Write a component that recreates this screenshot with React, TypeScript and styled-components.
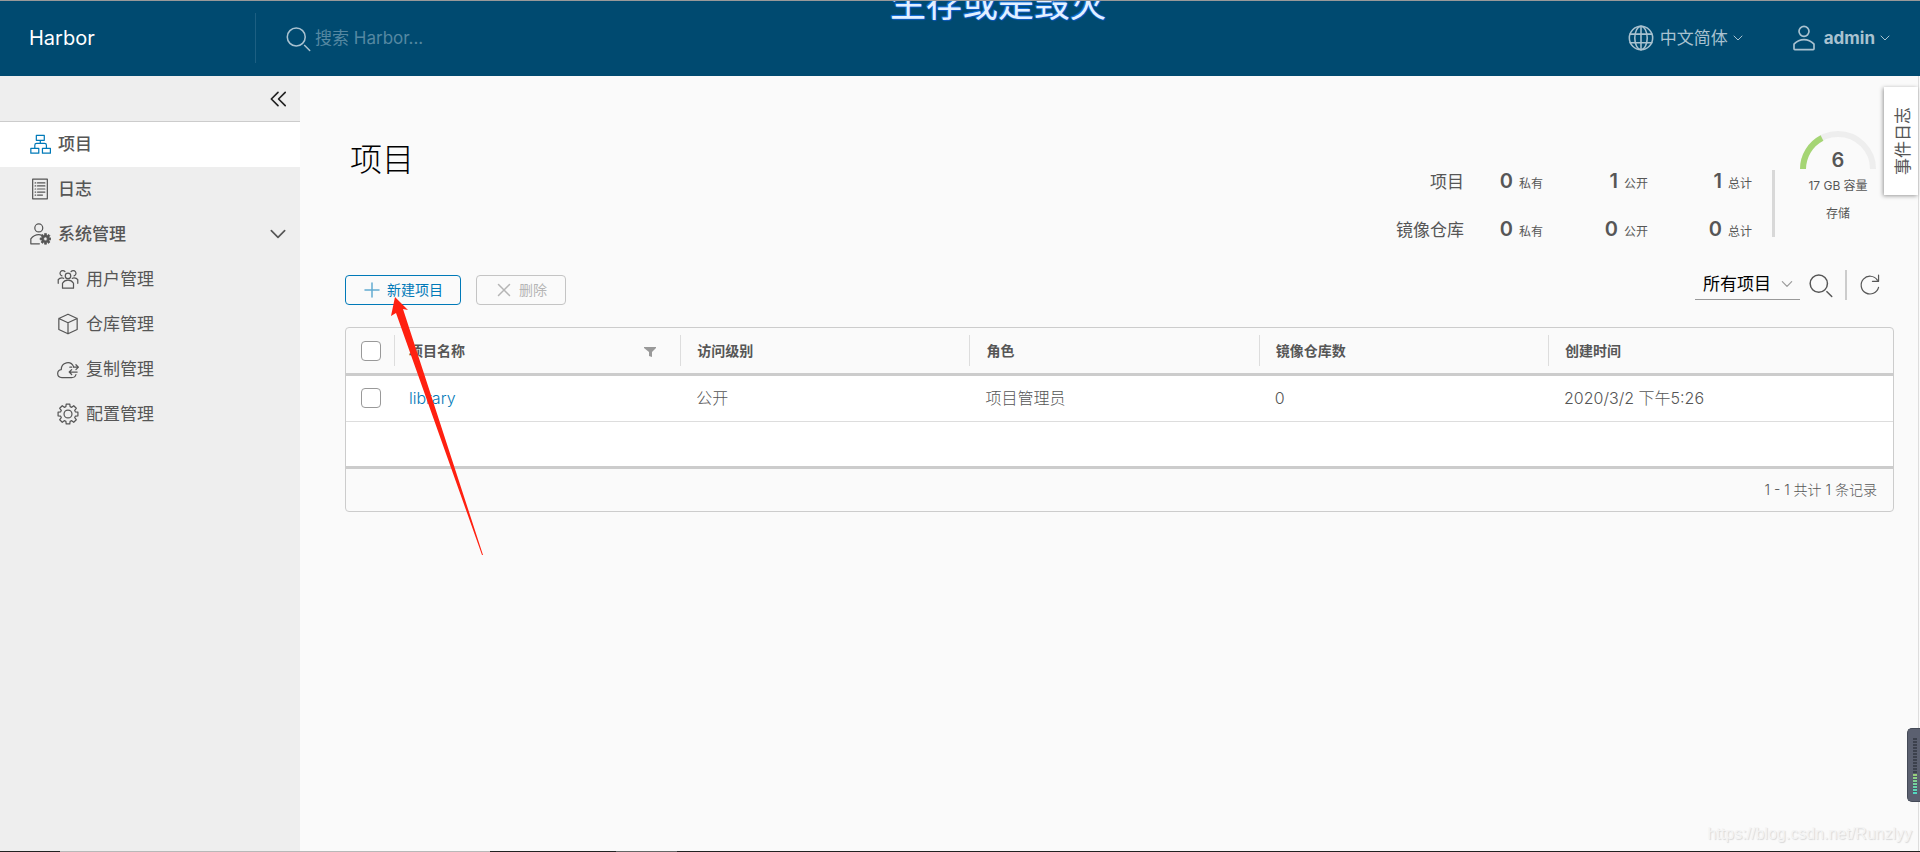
import React from "react";
import styled, { createGlobalStyle, css } from "styled-components";

const GlobalStyle = createGlobalStyle`
  *, *::before, *::after { box-sizing: border-box; }
  body {
    margin: 0;
    background: #fafafa;
    color: #565656;
    font-family: Inter, "Noto Sans CJK SC", sans-serif;
    font-size: 16px;
    line-height: 24px;
  }
  button, input, select { font: inherit; }
  a { text-decoration: none; }
`;

const Shell = styled.div`
  position: relative;
  display: flex;
  flex-direction: column;
  min-height: 100vh;
  overflow: hidden;
`;

const Header = styled.header`
  display: flex;
  align-items: center;
  height: 76px;
  padding-bottom: 1px;
  border-top: 1px solid #999;
  background: #004a70;
  color: #a9c2d0;
`;

const Brand = styled.a`
  flex: 0 0 255px;
  padding-left: 29px;
  color: #fff;
  font-size: 20px;
`;

const SearchBox = styled.label`
  display: flex;
  flex: 1;
  align-items: center;
  gap: 4px;
  height: 50px;
  padding-left: 28px;
  border-left: 1px solid #1d5f82;
`;

const SearchInput = styled.input`
  flex: 1;
  min-width: 0;
  padding: 0;
  border: 0;
  outline: 0;
  background: transparent;
  color: #fff;
  font-size: 17px;
  &::placeholder { color: #5588a2; opacity: 1; }
`;

const HeaderMenu = styled.button<{ $bold?: boolean }>`
  display: flex;
  align-items: center;
  padding: 0;
  border: 0;
  background: none;
  color: inherit;
  font-size: 17px;
  font-weight: ${(p) => (p.$bold ? 700 : 400)};
  & > span { margin: 0 4px 0 5px; }
`;

const HeaderMenus = styled.nav`
  display: flex;
  gap: 45px;
  padding-right: 29px;
`;

const Body = styled.div`
  display: flex;
  flex: 1;
`;

const Sidebar = styled.aside`
  flex: 0 0 300px;
  background: #eee;
`;

const CollapseBar = styled.div`
  display: flex;
  align-items: center;
  justify-content: flex-end;
  height: 46px;
  padding-right: 12px;
  border-bottom: 1px solid #ccc;
`;

const IconButton = styled.button`
  display: flex;
  padding: 0;
  border: 0;
  background: none;
  color: #565656;
`;

const NavItem = styled.a<{ $active?: boolean; $child?: boolean }>`
  display: flex;
  align-items: center;
  gap: 7px;
  height: 45px;
  padding: 0 12px 1px ${(p) => (p.$child ? 57 : 29)}px;
  background: ${(p) => (p.$active ? "#fff" : "transparent")};
  color: #565656;
  font-size: 17px;
  font-weight: ${(p) => (p.$child ? 400 : 500)};
  & > svg:first-child { color: ${(p) => (p.$active ? "#0079b8" : "#565656")}; }
  & > span { flex: 1; }
`;

const Main = styled.main`
  flex: 1;
  min-width: 0;
  margin-right: 1px;
  padding: 55px 24px 40px 45px;
  border-right: 1px solid #ddd;
`;

const Overview = styled.section`
  display: flex;
  align-items: flex-start;
`;

const Title = styled.h1`
  flex: 1;
  margin: 9px 0 0 5px;
  color: #000;
  font-size: 32px;
  font-weight: 300;
  line-height: 40px;
`;

const Stats = styled.div`
  display: grid;
  grid-template-columns: 70px 79px 105px 104px;
  grid-auto-rows: 48px;
  align-items: center;
  justify-items: end;
  padding-top: 27px;
  font-size: 17px;
`;

const Stat = styled.span`
  display: flex;
  align-items: baseline;
  gap: 6px;
  font-size: 12px;
  & > strong { font-size: 20px; font-weight: 600; }
`;

const StatsRule = styled.div`
  width: 3px;
  height: 67px;
  margin: 39px 25px 0 20px;
  background: #d8d8d8;
`;

const Storage = styled.div`
  display: flex;
  flex-direction: column;
  align-items: center;
  width: 76px;
  margin-right: 18px;
  font-size: 12px;
  line-height: 28px;
  white-space: nowrap;
`;

const Gauge = styled.div`
  display: grid;
  width: 76px;
  height: 41px;
  & > * { grid-area: 1 / 1; }
  & > strong {
    align-self: end;
    text-align: center;
    font-size: 20px;
    font-weight: 600;
    line-height: 24px;
  }
`;

const Toolbar = styled.section`
  display: flex;
  align-items: flex-start;
  justify-content: space-between;
  margin: 16px 0 22px;
`;

const Actions = styled.div`
  display: flex;
  gap: 15px;
  padding-top: 5px;
`;

const ActionButton = styled.button<{ $muted?: boolean }>`
  display: flex;
  align-items: center;
  gap: 6px;
  height: 30px;
  padding: 0 17px;
  border: 1px solid;
  border-radius: 4px;
  background: transparent;
  color: #0079b8;
  font-size: 14px;
  & > svg { opacity: 0.6; }
  ${(p) =>
    p.$muted &&
    css`
      padding: 0 18px;
      border-color: #c4c4c4;
      color: #b5b5b5;
      & > svg { opacity: 1; }
    `}
`;

const Filters = styled.div`
  display: flex;
  align-items: center;
  height: 30px;
  padding-right: 13px;
`;

const SelectBox = styled.div`
  display: grid;
  align-items: center;
  width: 105px;
  height: 29px;
  margin-right: 7px;
  padding-bottom: 1px;
  border-bottom: 1px solid #999;
  & > * { grid-area: 1 / 1; }
  & > svg { justify-self: end; margin-right: 6px; color: #999; pointer-events: none; }
`;

const Select = styled.select`
  width: 100%;
  padding: 0 0 0 8px;
  border: 0;
  outline: 0;
  appearance: none;
  background: transparent;
  color: #000;
  font-size: 17px;
`;

const FilterRule = styled.span`
  width: 2px;
  height: 30px;
  margin: 0 12px;
  background: #ccc;
`;

const Datagrid = styled.section`
  border: 1px solid #ccc;
  border-radius: 4px;
`;

const Table = styled.table`
  width: 100%;
  table-layout: fixed;
  border-spacing: 0;
`;

const Col = styled.col<{ $width?: string }>`
  width: ${(p) => p.$width ?? "auto"};
`;

const HeadCell = styled.th`
  height: 48px;
  padding: 0;
  border-bottom: 3px solid #ccc;
  font-size: 14px;
  font-weight: 700;
  text-align: left;
`;

const HeadInner = styled.div<{ $first?: boolean }>`
  display: flex;
  align-items: center;
  justify-content: space-between;
  height: 31px;
  padding: 0 23px 0 ${(p) => (p.$first ? 14 : 16)}px;
  border-left: 1px solid #ddd;
`;

const Cell = styled.td<{ $first?: boolean }>`
  height: 46px;
  padding: 0 0 1px ${(p) => (p.$first ? 15 : 16)}px;
  border-bottom: 1px solid #ddd;
  background: #fff;
  font-weight: 300;
  & > a { color: #0079b8; }
`;

const Check = styled.input`
  display: block;
  width: 20px;
  height: 20px;
  margin: 0 0 0 15px;
  border: 1px solid #999;
  border-radius: 4px;
  appearance: none;
  background: #fff;
`;

const CheckCell = styled(Cell)`
  padding-left: 0;
`;

const Filler = styled.div`
  height: 47px;
  border-bottom: 3px solid #ccc;
  background: #fff;
`;

const GridFooter = styled.footer`
  display: flex;
  align-items: center;
  justify-content: flex-end;
  height: 42px;
  padding: 0 16px 1px 0;
  font-size: 14px;
  font-weight: 300;
`;

const EventTab = styled.button`
  position: absolute;
  top: 87px;
  right: 2px;
  width: 34px;
  height: 108px;
  padding: 0 0 0 4px;
  border: 0;
  background: #fff;
  box-shadow: -1px 1px 4px #999;
  color: #565656;
  font-size: 17px;
  writing-mode: vertical-rl;
  & > span { display: block; transform: rotate(180deg); text-orientation: sideways; writing-mode: vertical-rl; margin: auto; }
`;

const Lyrics = styled.div`
  position: absolute;
  top: -20px;
  left: 0;
  right: 0;
  height: 48px;
  padding-left: 76px;
  color: #e3f0ff;
  font-size: 36px;
  line-height: 48px;
  text-align: center;
  text-shadow: 0 0 1px #1673e0, 0 0 2px #1673e0, 1px 1px 1px #0b4fae, -1px -1px 1px #1673e0;
  pointer-events: none;
`;

const TopEdge = styled.div`
  position: absolute;
  top: 0;
  left: 0;
  right: 0;
  height: 1px;
  background: #999;
`;

const BottomEdge = styled.div`
  position: absolute;
  right: 0;
  bottom: 0;
  left: 0;
  height: 1px;
  background: linear-gradient(90deg, #222 60px, #b8b8b8 60px 490px, #222 490px 616px, #666 616px 677px, #222 677px);
`;

const Watermark = styled.div`
  position: absolute;
  right: 8px;
  bottom: 6px;
  color: #f4f4f4;
  font-family: "Liberation Sans", sans-serif;
  font-size: 16px;
  text-shadow: 1px 1px 1px #d8d8d8;
`;

const Meter = styled.div`
  position: absolute;
  right: 0;
  bottom: 50px;
  width: 13px;
  height: 74px;
  padding: 9px 3px 8px 5px;
  border: 1px solid #444a57;
  border-right: 0;
  border-radius: 5px 0 0 5px;
  background: #5b6070;
`;

const MeterBars = styled.div<{ $live?: boolean }>`
  height: ${(p) => (p.$live ? 20 : 36)}px;
  background: ${(p) =>
    p.$live
      ? "repeating-linear-gradient(transparent 0 2px, #4d5664 2px 3px), linear-gradient(#9ccf78, #4fd8c4)"
      : "repeating-linear-gradient(#3c414d 0 2px, #5b6070 2px 3px)"};
`;

const Pointer = styled.svg`
  position: absolute;
  top: 297px;
  left: 390px;
  pointer-events: none;
`;

type IconProps = { size?: number; children: React.ReactNode; width?: number };

const Line = ({ size = 20, width = 2, children }: IconProps) => (
  <svg width={size} height={size} viewBox="0 0 36 36" fill="none" stroke="currentColor" strokeWidth={width} strokeLinejoin="round" strokeLinecap="round" aria-hidden="true">
    {children}
  </svg>
);

const SearchIcon = ({ size = 26 }: { size?: number }) => (
  <svg width={size} height={size} viewBox="0 0 36 36" fill="currentColor" aria-hidden="true">
    <path d="M16.33,5.05A10.95,10.95,0,1,1,5.39,16,11,11,0,0,1,16.33,5.05m0-2.05a13,13,0,1,0,13,13,13,13,0,0,0-13-13Z" />
    <path d="M35,33.29l-7.37-7.42-1.42,1.41,7.37,7.42A1,1,0,1,0,35,33.29Z" />
  </svg>
);

const Caret = ({ size = 12, width = 3 }: { size?: number; width?: number }) => (
  <Line size={size} width={width}><path d="M6 12l12 12 12-12" /></Line>
);

const GlobeIcon = () => (
  <Line size={28}>
    <circle cx="18" cy="18" r="15" />
    <ellipse cx="18" cy="18" rx="8" ry="15" />
    <path d="M18 3v30M4 13h28M4 24h28" />
  </Line>
);

const UserIcon = () => (
  <svg width="30" height="30" viewBox="0 0 36 36" fill="currentColor" aria-hidden="true">
    <path d="M18,17a7,7,0,1,0-7-7A7,7,0,0,0,18,17ZM18,5a5,5,0,1,1-5,5A5,5,0,0,1,18,5Z" />
    <path d="M30.47,24.37a17.16,17.16,0,0,0-24.93,0A2,2,0,0,0,5,25.74V31a2,2,0,0,0,2,2H29a2,2,0,0,0,2-2V25.74A2,2,0,0,0,30.47,24.37ZM29,31H7V25.73a15.17,15.17,0,0,1,22,0h0Z" />
  </svg>
);

const OrgIcon = () => (
  <Line size={22}>
    <path d="M12 4h13v8H12zM3 25h13v8H3zM22 25h13v8H22zM18.500 12v5M9.500 24v-4q0-3 3-3h13q3 0 3 3v4" />
  </Line>
);

const LogIcon = () => (
  <Line size={22}>
    <path d="M6 2h24v32H6z" />
    <path d="M14 8h12M14 13h12M14 18h12M14 23h12M14 28h8M10 8h1M10 13h1M10 18h1M10 23h1M10 28h1" />
  </Line>
);

const gear = (cx: number, cy: number, inner: number, outer: number) => {
  const points: string[] = [];
  for (let i = 0; i < 8; i++) {
    const a = (i * Math.PI) / 4;
    [[-0.28, inner], [-0.18, outer], [0.18, outer], [0.28, inner]].forEach(([d, r]) => {
      points.push(`${(cx + r * Math.sin(a + d)).toFixed(2)},${(cy - r * Math.cos(a + d)).toFixed(2)}`);
    });
  }
  return `M${points.join("L")}Z`;
};

const AdminIcon = () => (
  <Line size={22}>
    <circle cx="16" cy="8" r="6.500" />
    <path d="M17 34H3v-8q5-7 13-7 3 0 5 1" />
    <path fill="currentColor" fillRule="evenodd" strokeWidth="1" d={`${gear(27, 26, 6.5, 9)}M30 26a3 3 0 1 0-6 0a3 3 0 1 0 6 0Z`} />
  </Line>
);

const GroupIcon = () => (
  <Line size={22}>
    <circle cx="18" cy="13" r="4.500" />
    <path d="M9 33v-8q3-5 9-5t9 5v8zM13 6a4.500 4.500 0 1 0-5 7M23 6a4.500 4.500 0 1 1 5 7M2 25v-6q2-3 6-3 2 0 3 1M34 25v-6q-2-3-6-3-2 0-3 1" />
  </Line>
);

const BoxIcon = () => (
  <Line size={22}>
    <path d="M18 2l15 7v18l-15 7-15-7V9zM3 9l15 7 15-7M18 16v18" />
  </Line>
);

const CloudIcon = () => (
  <Line size={22}>
    <path d="M31 27q-1 5-7 5H8c-9 0-9-12-1-13 0-13 16-15 20-5" />
    <path d="M21 15h3M27 15h8m-4-4 4 4-4 4M33 23H20m4-4-4 4 4 4" />
  </Line>
);

const GearIcon = () => (
  <Line size={22}>
    <path d={gear(18, 18, 12.5, 16.5)} />
    <circle cx="18" cy="18" r="6.500" />
  </Line>
);

const RefreshIcon = () => (
  <Line size={22}>
    <path d="M32 22a14.500 14.500 0 1 1-2-12M32 2v10h-10" />
  </Line>
);

const children = [
  { label: "用户管理", icon: <GroupIcon /> },
  { label: "仓库管理", icon: <BoxIcon /> },
  { label: "复制管理", icon: <CloudIcon /> },
  { label: "配置管理", icon: <GearIcon /> },
];

const stats = [
  { label: "项目", values: [["0", "私有"], ["1", "公开"], ["1", "总计"]] },
  { label: "镜像仓库", values: [["0", "私有"], ["0", "公开"], ["0", "总计"]] },
];

const columns = ["项目名称", "访问级别", "角色", "镜像仓库数", "创建时间"];

export default function App() {
  return (
    <Shell>
      <GlobalStyle />
      <Header>
        <Brand href="#">Harbor</Brand>
        <SearchBox>
          <SearchIcon size={27} />
          <SearchInput aria-label="搜索" placeholder="搜索 Harbor..." />
        </SearchBox>
        <HeaderMenus>
          <HeaderMenu type="button"><GlobeIcon /><span>中文简体</span><Caret /></HeaderMenu>
          <HeaderMenu type="button" $bold><UserIcon /><span>admin</span><Caret /></HeaderMenu>
        </HeaderMenus>
      </Header>
      <Body>
        <Sidebar>
          <CollapseBar>
            <IconButton type="button" aria-label="收起">
              <Line size={20} width={3}><path d="M18 6L6 18l12 12M31 6L19 18l12 12" stroke="#222" /></Line>
            </IconButton>
          </CollapseBar>
          <nav>
            <NavItem href="#projects" $active><OrgIcon /><span>项目</span></NavItem>
            <NavItem href="#logs"><LogIcon /><span>日志</span></NavItem>
            <NavItem href="#admin"><AdminIcon /><span>系统管理</span><Caret size={20} /></NavItem>
            {children.map((c) => (
              <NavItem key={c.label} href="#admin" $child>{c.icon}<span>{c.label}</span></NavItem>
            ))}
          </nav>
        </Sidebar>
        <Main>
          <Overview>
            <Title>项目</Title>
            <Stats>
              {stats.map((row) => (
                <React.Fragment key={row.label}>
                  <span>{row.label}</span>
                  {row.values.map(([n, name]) => (
                    <Stat key={name}><strong>{n}</strong>{name}</Stat>
                  ))}
                </React.Fragment>
              ))}
            </Stats>
            <StatsRule />
            <Storage>
              <Gauge>
                <svg width="76" height="38" viewBox="0 0 76 38" fill="none" strokeWidth="6" aria-hidden="true">
                  <path d="M3 38a35 35 0 0 1 70 0" stroke="#eee" />
                  <path d="M3 38a35 35 0 0 1 19-31" stroke="#a5d574" />
                </svg>
                <strong>6</strong>
              </Gauge>
              <span>17 GB 容量</span>
              <span>存储</span>
            </Storage>
          </Overview>
          <Toolbar>
            <Actions>
              <ActionButton type="button">
                <Line size={18} width={3}><path d="M18 4v28M4 18h28" /></Line>新建项目
              </ActionButton>
              <ActionButton type="button" $muted disabled>
                <Line size={18} width={3}><path d="M7 7l22 22M29 7L7 29" /></Line>删除
              </ActionButton>
            </Actions>
            <Filters>
              <SelectBox>
                <Select aria-label="项目筛选"><option>所有项目</option></Select>
                <Caret size={14} />
              </SelectBox>
              <IconButton type="button" aria-label="搜索项目"><SearchIcon /></IconButton>
              <FilterRule />
              <IconButton type="button" aria-label="刷新"><RefreshIcon /></IconButton>
            </Filters>
          </Toolbar>
          <Datagrid>
            <Table>
              <colgroup>
                <Col $width="48px" />
                <Col $width="18.500%" />
                <Col $width="18.700%" />
                <Col $width="18.700%" />
                <Col $width="18.700%" />
                <Col />
              </colgroup>
              <thead>
                <tr>
                  <HeadCell><Check type="checkbox" aria-label="全选" /></HeadCell>
                  {columns.map((name, i) => (
                    <HeadCell key={name}>
                      <HeadInner $first={i === 0}>
                        {name}
                        {i === 0 && (
                          <svg width="14" height="12" viewBox="0 0 14 12" fill="#999" aria-hidden="true"><path d="M1 2h12v1L9 7v5l-3-1V7L1 3z" /></svg>
                        )}
                      </HeadInner>
                    </HeadCell>
                  ))}
                </tr>
              </thead>
              <tbody>
                <tr>
                  <CheckCell><Check type="checkbox" aria-label="library" /></CheckCell>
                  <Cell $first><a href="#library">library</a></Cell>
                  <Cell>公开</Cell>
                  <Cell>项目管理员</Cell>
                  <Cell>0</Cell>
                  <Cell>2020/3/2 下午5:26</Cell>
                </tr>
              </tbody>
            </Table>
            <Filler />
            <GridFooter>1 - 1 共计 1 条记录</GridFooter>
          </Datagrid>
        </Main>
      </Body>
      <EventTab type="button"><span>事件日志</span></EventTab>
      <Lyrics>生存或是毁灭</Lyrics>
      <TopEdge />
      <Pointer width="94" height="259" viewBox="0 0 94 259" fill="#ff2010" aria-hidden="true">
        <path d="M5 0L18 13L13 12L93 258L92 258L6 16L1 19Z" />
      </Pointer>
      <Watermark>https://blog.csdn.net/Runzlyy</Watermark>
      <Meter><MeterBars /><MeterBars $live /></Meter>
      <BottomEdge />
    </Shell>
  );
}
